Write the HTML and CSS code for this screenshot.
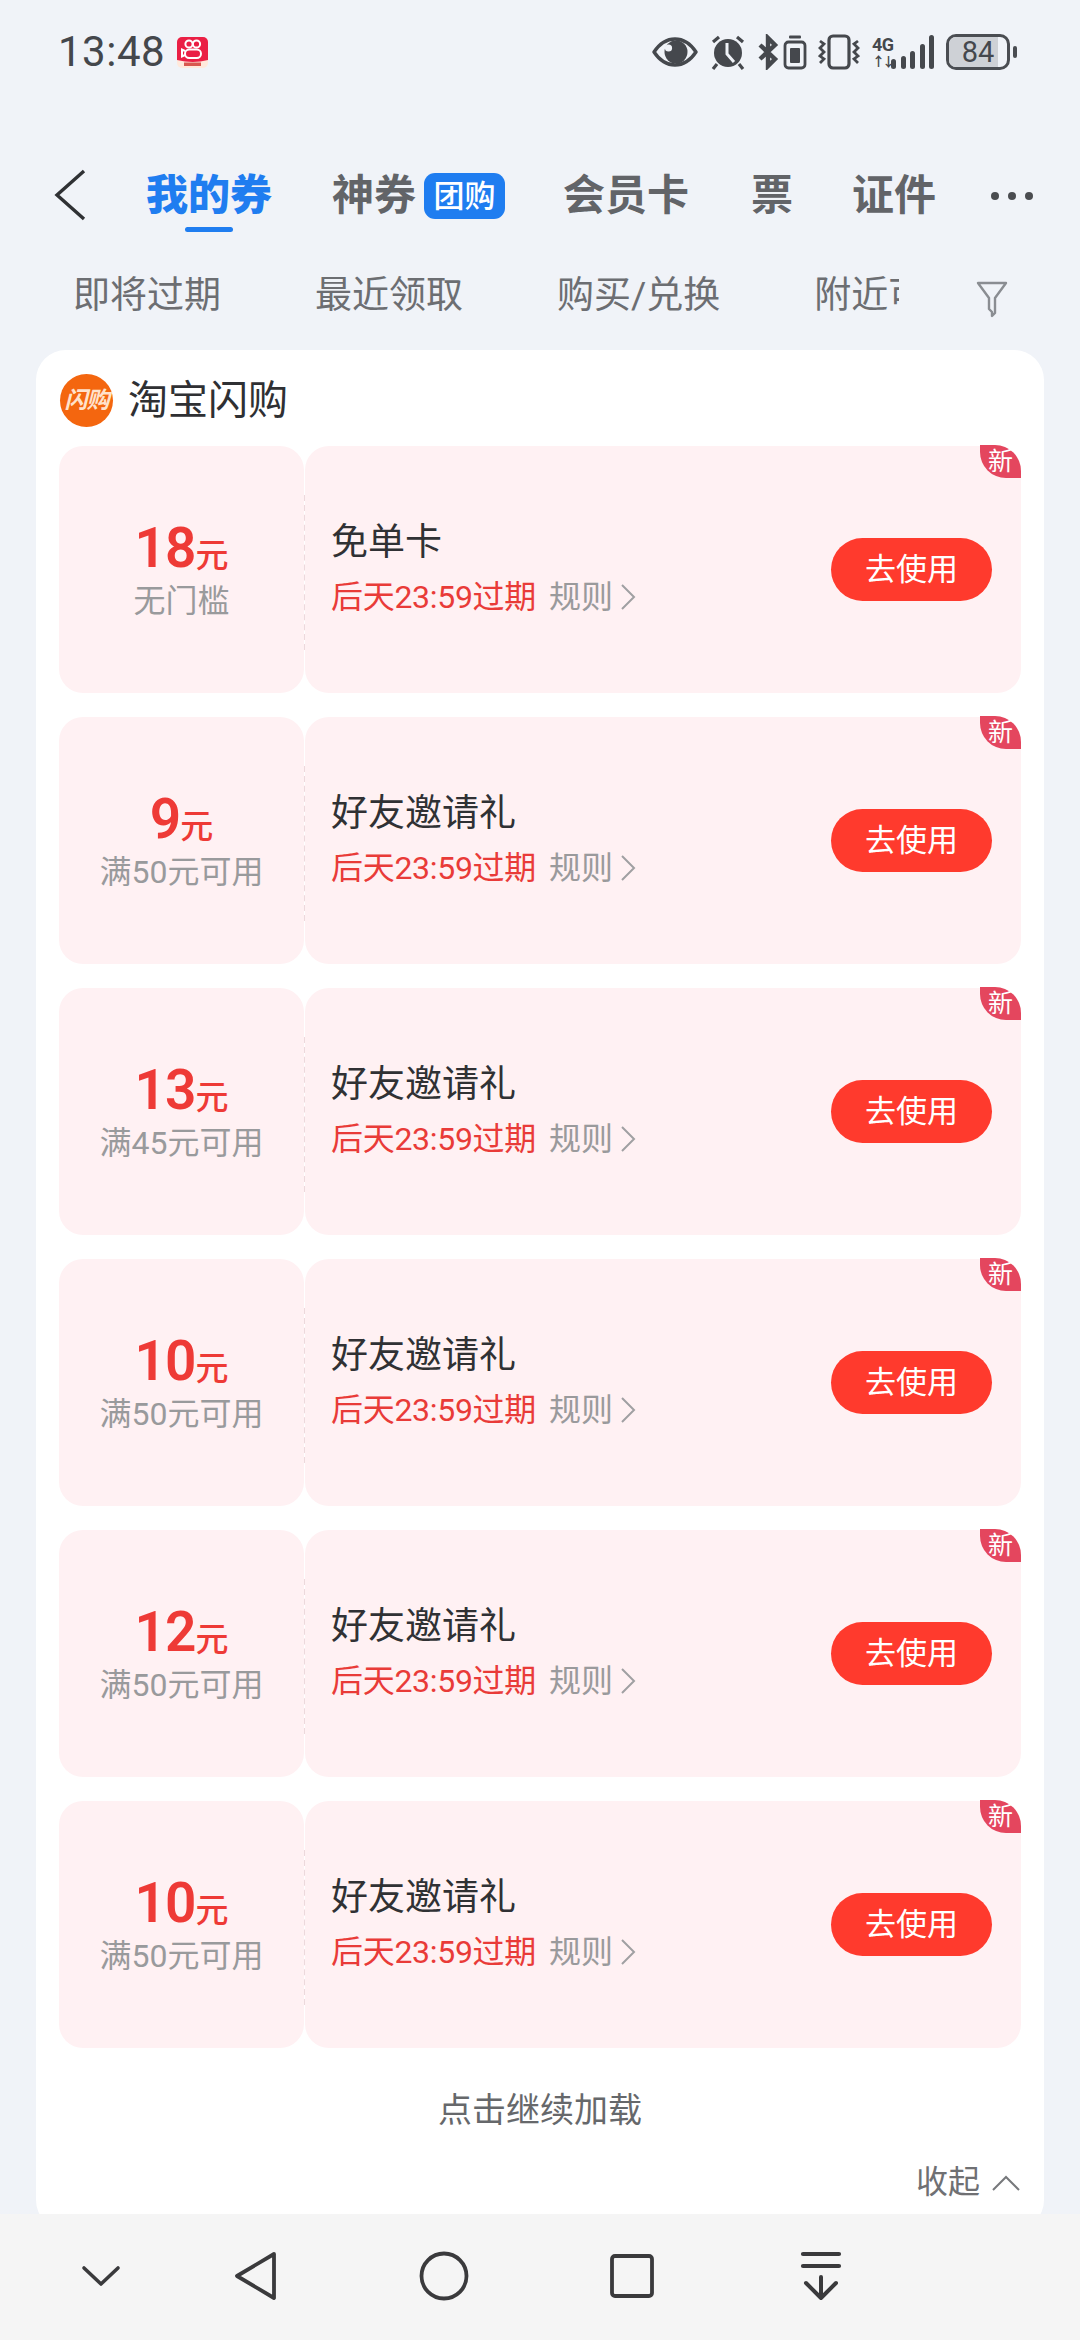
FILE: index.html
```html
<!DOCTYPE html>
<html lang="zh-CN">
<head>
<meta charset="utf-8">
<title>我的券</title>
<link rel="stylesheet" href="styles.css">
</head>
<body>
<div class="screen">
  <header class="status">
    <div class="status-left">
      <span class="time">13:48</span>
      <svg class="app-logo" viewBox="0 0 31 31" width="31" height="31">
        <rect x="0" y="0" width="31" height="31" rx="5" fill="#ffe9dc"/>
        <path d="M0 5a5 5 0 0 1 5-5h21a5 5 0 0 1 5 5v18q-15 4-31 0z" fill="#ea1f45"/>
        <g fill="none" stroke="#fff" stroke-width="2"><circle cx="12" cy="7" r="3.6"/><circle cx="19.5" cy="7" r="3.6"/><rect x="8" y="12.5" width="16" height="8.5" rx="4.2"/><path d="M8 14l-3-1.5v7l3-1.5"/></g>
        <rect x="7" y="25.5" width="17" height="3.5" fill="#d8574f"/>
      </svg>
    </div>
    <div class="status-right">
      <svg class="ic-eye" viewBox="0 0 46 32" width="46" height="32"><path d="M2 16C8 7 15 3 23 3s15 4 21 13c-6 9-13 13-21 13S8 25 2 16z" fill="none" stroke="#45484d" stroke-width="3.4" stroke-linejoin="round"/><circle cx="24" cy="16" r="11.5" fill="#45484d"/><circle cx="16.5" cy="12" r="3.6" fill="#f0f3f8"/></svg>
      <svg class="ic-alarm" viewBox="0 0 36 36" width="36" height="36"><circle cx="18" cy="19" r="14" fill="#45484d"/><path d="M17 9v11l7 8" fill="none" stroke="#f0f3f8" stroke-width="3"/><path d="M3 8l6-5M33 8l-6-5M7 30l-4 5M29 30l4 5" fill="none" stroke="#45484d" stroke-width="3.2"/></svg>
      <svg class="ic-bt" viewBox="0 0 50 36" width="50" height="36"><path d="M2 11l15 14-7 7V14M2 25L17 11 10 4v10" fill="none" stroke="#45484d" stroke-width="4.4"/><rect x="31" y="1.5" width="12" height="3" rx="1" fill="#45484d"/><rect x="27" y="8" width="20" height="26" rx="3.5" fill="none" stroke="#45484d" stroke-width="2.8"/><rect x="32" y="14" width="10" height="15" rx="1" fill="#45484d"/></svg>
      <svg class="ic-vib" viewBox="0 0 42 36" width="42" height="36"><rect x="11" y="2" width="20" height="32" rx="4" fill="none" stroke="#45484d" stroke-width="3.2"/><path d="M2 7l4 3-4 4 4 4-4 4 4 3-4 4M40 7l-4 3 4 4-4 4 4 4-4 3 4 4" fill="none" stroke="#45484d" stroke-width="2.8"/></svg>
      <span class="net">
        <span class="net-type"><span class="net-4g">4G</span><span class="net-arrows">↑↓</span></span>
        <span class="bars"><i class="b1"></i><i class="b2"></i><i class="b3"></i><i class="b4"></i><i class="b5"></i></span>
      </span>
      <span class="battery"><span class="batt-body"><span class="batt-fill"></span><span class="batt-num">84</span></span><span class="batt-nub"></span></span>
    </div>
  </header>

  <nav class="tabs">
    <svg class="back" viewBox="0 0 32 52" width="32" height="52"><path d="M30 2L3 26l27 24" fill="none" stroke="#2f3134" stroke-width="3.4"/></svg>
    <span class="tab tab-on">我的券</span>
    <span class="tab tab-2">神券<span class="tag">团购</span></span>
    <span class="tab tab-3">会员卡</span>
    <span class="tab tab-4">票</span>
    <span class="tab tab-5">证件</span>
    <span class="dots"><i></i><i></i><i></i></span>
  </nav>

  <div class="filters">
    <div class="filter-scroll">
      <span class="filter">即将过期</span>
      <span class="filter">最近领取</span>
      <span class="filter">购买/兑换</span>
      <span class="filter">附近可用</span>
    </div>
    <svg class="funnel" viewBox="0 0 32 38" width="32" height="38"><path d="M2 3h28L19 18v15l-3 3v-4l-3-3V18z" fill="none" stroke="#8a8d92" stroke-width="2.4" stroke-linejoin="round"/></svg>
  </div>

  <main class="main">
    <section class="card">
      <div class="shop">
        <span class="shop-logo">闪购</span>
        <span class="shop-name">淘宝闪购</span>
      </div>
      <div class="list">
        <article class="coupon">
          <div class="stub"><div class="amount">18<small>元</small></div><div class="cond">无门槛</div></div>
          <div class="body">
            <div class="info"><div class="name">免单卡</div><div class="meta"><span class="exp">后天23:59过期</span><span class="rule">规则</span><svg class="rule-ic" viewBox="0 0 16 28" width="16" height="28"><path d="M2 2l12 12L2 26" fill="none" stroke="#a0a0a2" stroke-width="2"/></svg></div></div>
            <span class="use">去使用</span><span class="new">新</span>
          </div>
        </article>
        <article class="coupon">
          <div class="stub"><div class="amount">9<small>元</small></div><div class="cond">满50元可用</div></div>
          <div class="body">
            <div class="info"><div class="name">好友邀请礼</div><div class="meta"><span class="exp">后天23:59过期</span><span class="rule">规则</span><svg class="rule-ic" viewBox="0 0 16 28" width="16" height="28"><path d="M2 2l12 12L2 26" fill="none" stroke="#a0a0a2" stroke-width="2"/></svg></div></div>
            <span class="use">去使用</span><span class="new">新</span>
          </div>
        </article>
        <article class="coupon">
          <div class="stub"><div class="amount">13<small>元</small></div><div class="cond">满45元可用</div></div>
          <div class="body">
            <div class="info"><div class="name">好友邀请礼</div><div class="meta"><span class="exp">后天23:59过期</span><span class="rule">规则</span><svg class="rule-ic" viewBox="0 0 16 28" width="16" height="28"><path d="M2 2l12 12L2 26" fill="none" stroke="#a0a0a2" stroke-width="2"/></svg></div></div>
            <span class="use">去使用</span><span class="new">新</span>
          </div>
        </article>
        <article class="coupon">
          <div class="stub"><div class="amount">10<small>元</small></div><div class="cond">满50元可用</div></div>
          <div class="body">
            <div class="info"><div class="name">好友邀请礼</div><div class="meta"><span class="exp">后天23:59过期</span><span class="rule">规则</span><svg class="rule-ic" viewBox="0 0 16 28" width="16" height="28"><path d="M2 2l12 12L2 26" fill="none" stroke="#a0a0a2" stroke-width="2"/></svg></div></div>
            <span class="use">去使用</span><span class="new">新</span>
          </div>
        </article>
        <article class="coupon">
          <div class="stub"><div class="amount">12<small>元</small></div><div class="cond">满50元可用</div></div>
          <div class="body">
            <div class="info"><div class="name">好友邀请礼</div><div class="meta"><span class="exp">后天23:59过期</span><span class="rule">规则</span><svg class="rule-ic" viewBox="0 0 16 28" width="16" height="28"><path d="M2 2l12 12L2 26" fill="none" stroke="#a0a0a2" stroke-width="2"/></svg></div></div>
            <span class="use">去使用</span><span class="new">新</span>
          </div>
        </article>
        <article class="coupon">
          <div class="stub"><div class="amount">10<small>元</small></div><div class="cond">满50元可用</div></div>
          <div class="body">
            <div class="info"><div class="name">好友邀请礼</div><div class="meta"><span class="exp">后天23:59过期</span><span class="rule">规则</span><svg class="rule-ic" viewBox="0 0 16 28" width="16" height="28"><path d="M2 2l12 12L2 26" fill="none" stroke="#a0a0a2" stroke-width="2"/></svg></div></div>
            <span class="use">去使用</span><span class="new">新</span>
          </div>
        </article>
      </div>
      <div class="more">点击继续加载</div>
      <div class="fold"><span>收起</span><svg viewBox="0 0 30 18" width="30" height="18"><path d="M2 16L15 3l13 13" fill="none" stroke="#77797c" stroke-width="2"/></svg></div>
    </section>
  </main>

  <footer class="navbar">
    <svg class="nav-down" viewBox="0 0 40 24" width="40" height="24"><path d="M3 4l17 16L37 4" fill="none" stroke="#3a3a3c" stroke-width="3.6" stroke-linecap="round" stroke-linejoin="round"/></svg>
    <svg class="nav-back" viewBox="0 0 44 50" width="44" height="50"><path d="M40 3L3 25l37 22z" fill="none" stroke="#3a3a3c" stroke-width="3.8" stroke-linejoin="round"/></svg>
    <svg class="nav-home" viewBox="0 0 50 50" width="50" height="50"><circle cx="25" cy="25" r="22.5" fill="none" stroke="#3a3a3c" stroke-width="3.8"/></svg>
    <svg class="nav-recent" viewBox="0 0 46 46" width="46" height="46"><rect x="3" y="3" width="40" height="40" rx="3" fill="none" stroke="#3a3a3c" stroke-width="3.8"/></svg>
    <svg class="nav-pull" viewBox="0 0 42 50" width="42" height="50"><path d="M3 3h36M3 15h36" stroke="#3a3a3c" stroke-width="4.2" stroke-linecap="round"/><path d="M21 26v21M6 32l15 15 15-15" fill="none" stroke="#3a3a3c" stroke-width="4" stroke-linecap="round" stroke-linejoin="round"/></svg>
  </footer>
</div>
</body>
</html>
```

FILE: styles.css
```css
* { box-sizing: border-box; margin: 0; padding: 0; }
html, body { width: 1080px; height: 2340px; overflow: hidden; }
body {
  font-family: Roboto, "Noto Sans CJK SC", sans-serif;
  background: #f0f3f8;
}
.screen { display: flex; flex-direction: column; width: 1080px; height: 2340px; }

/* status bar */
.status {
  height: 104px;
  display: flex;
  justify-content: space-between;
  align-items: center;
  padding: 0 63px 0 58px;
  flex: none;
}
.status-left { display: flex; align-items: center; gap: 12px; }
.time { font-size: 42px; color: #44474c; line-height: 1; letter-spacing: 0.5px; }
.app-logo { display: block; }
.status-right { display: flex; align-items: center; }
.status-right svg { display: block; flex: none; }
.ic-eye { margin-right: 12px; }
.ic-alarm { margin-right: 12px; }
.ic-bt { margin-right: 10px; }
.ic-vib { margin-right: 12px; }
.net { display: flex; align-items: flex-end; height: 34px; margin-right: 12px; }
.net-type { display: flex; flex-direction: column; width: 19px; line-height: 1; color: #45484d; font-weight: 700; white-space: nowrap; }
.net-4g { font-size: 18px; line-height: 20px; letter-spacing: -0.5px; }
.net-arrows { font-size: 13px; line-height: 14px; letter-spacing: -3px; }
.bars { display: flex; align-items: flex-end; gap: 4.5px; height: 34px; }
.bars i { display: block; width: 5px; background: #45484d; border-radius: 2.5px; }
.bars .b1 { height: 10px; }
.bars .b2 { height: 13px; }
.bars .b3 { height: 18px; }
.bars .b4 { height: 25px; }
.bars .b5 { height: 34px; }
.battery { display: flex; align-items: center; }
.batt-body {
  position: relative;
  display: flex;
  align-items: center;
  justify-content: center;
  width: 64px;
  height: 36px;
  border: 3px solid #4a4d52;
  border-radius: 10px;
  overflow: hidden;
}
.batt-fill { position: absolute; left: 0; top: 0; bottom: 0; width: 84%; background: #ced1d6; }
.batt-num { position: relative; font-size: 29px; line-height: 1; color: #45484d; }
.batt-nub { display: block; width: 4px; height: 12px; margin-left: 3px; background: #4a4d52; border-radius: 2px; }

/* main tabs */
.tabs {
  position: relative;
  height: 100px;
  margin-top: 42px;
  display: flex;
  align-items: center;
  padding-left: 54px;
  flex: none;
}
.back { display: block; flex: none; margin-right: 60px; margin-top: -2px; }
.tab { font-size: 42px; line-height: 50px; font-weight: 700; color: #626468; white-space: nowrap; display: flex; align-items: center; }
.tab-on { position: relative; color: #1f7df0; font-weight: 900; }
.tab-on::after {
  content: "";
  position: absolute;
  left: 39px;
  bottom: -11px;
  width: 48px;
  height: 5px;
  border-radius: 3px;
  background: #1f7df0;
}
.tab-2 { margin-left: 60px; }
.tag {
  display: inline-flex;
  align-items: center;
  justify-content: center;
  width: 81px;
  height: 46px;
  margin-left: 8px;
  border-radius: 11px;
  background: #1f7df0;
  color: #fff;
  font-size: 31px;
  font-weight: 500;
  line-height: 1;
}
.tab-3 { margin-left: 58px; }
.tab-4 { margin-left: 62px; }
.tab-5 { margin-left: 59px; }
.dots { display: flex; gap: 9px; margin-left: 55px; }
.dots i { display: block; width: 8px; height: 8px; border-radius: 50%; background: #4a4c50; }

/* filter row */
.filters {
  height: 60px;
  margin-top: 20px;
  display: flex;
  align-items: center;
  padding-left: 73px;
  flex: none;
}
.filter-scroll {
  width: 826px;
  display: flex;
  gap: 94px;
  overflow: hidden;
  white-space: nowrap;
}
.filter { font-size: 37px; line-height: 50px; color: #6c6e72; flex: none; }
.funnel { display: block; margin: 6px 0 0 77px; }

/* card */
.main { flex: 1; min-height: 0; overflow: hidden; padding: 24px 36px 0; }
.card {
  background: #fff;
  border-radius: 30px;
  padding: 0 23px;
  height: 1880px;
}
.shop { height: 96px; display: flex; align-items: center; gap: 15px; padding-left: 1px; padding-top: 4px; }
.shop-logo {
  width: 53px;
  height: 53px;
  border-radius: 50%;
  background: #f4660f;
  color: #ffe2cc;
  font-size: 23px;
  font-weight: 700;
  font-style: italic;
  display: flex;
  align-items: center;
  justify-content: center;
  line-height: 1;
  letter-spacing: -1px;
}
.shop-name { font-size: 40px; line-height: 50px; color: #2f3033; padding-top: 2px; }

.list { display: flex; flex-direction: column; gap: 24px; }
.coupon { display: flex; gap: 1px; height: 247px; }
.stub {
  position: relative;
  width: 245px;
  flex: none;
  background: #fff1f3;
  border-radius: 24px;
  display: flex;
  flex-direction: column;
  align-items: center;
  padding-top: 72px;
}
.stub::after {
  content: "";
  position: absolute;
  right: -1.5px;
  top: 49px;
  height: 155px;
  border-right: 2px dashed #ecd9dc;
}
.amount { font-size: 55px; line-height: 60px; font-weight: 600; letter-spacing: -1px; color: #ee3a36; display: flex; align-items: baseline; }
.amount small { font-size: 33px; font-weight: 500; line-height: 1; letter-spacing: 0; }
.cond { font-size: 32px; line-height: 40px; margin-top: 3px; color: #999a9c; }
.body {
  position: relative;
  flex: 1;
  background: #fff1f3;
  border-radius: 24px;
  display: flex;
  align-items: center;
  justify-content: space-between;
  padding: 0 29px 0 26px;
}
.info { display: flex; flex-direction: column; margin-top: -2px; }
.name { font-size: 37px; line-height: 50px; color: #303134; }
.meta { display: flex; align-items: center; margin-top: 7px; height: 44px; }
.exp { font-size: 32px; line-height: 44px; color: #e93b38; letter-spacing: -0.3px; }
.rule { font-size: 32px; line-height: 44px; color: #9a9a9c; margin-left: 13px; }
.rule-ic { display: block; margin-left: 7px; }
.use {
  width: 161px;
  height: 63px;
  border-radius: 32px;
  background: #ff3a2d;
  color: #fff;
  font-size: 31px;
  line-height: 1;
  display: flex;
  align-items: center;
  justify-content: center;
}
.new {
  position: absolute;
  top: -1px;
  right: 0;
  width: 41px;
  height: 33px;
  background: #e4465e;
  color: #fff;
  border-radius: 0 26px 0 26px;
  font-size: 25px;
  line-height: 33px;
  text-align: center;
}

.more { margin-top: 38px; height: 48px; text-align: center; font-size: 34px; line-height: 48px; color: #66686b; }
.fold {
  margin-top: 26px;
  height: 44px;
  display: flex;
  align-items: center;
  justify-content: flex-end;
  gap: 11px;
  font-size: 32px;
  line-height: 44px;
  color: #6f7073;
}
.fold svg { display: block; margin-top: 2px; }

/* system nav */
.navbar {
  flex: none;
  height: 126px;
  background: #f5f5f5;
  display: flex;
  align-items: center;
  padding: 0 0 2px 81px;
}
.navbar svg { display: block; flex: none; }
.nav-back { margin-left: 113px; }
.nav-home { margin-left: 141px; }
.nav-recent { margin-left: 140px; }
.nav-pull { margin-left: 145px; }
```
